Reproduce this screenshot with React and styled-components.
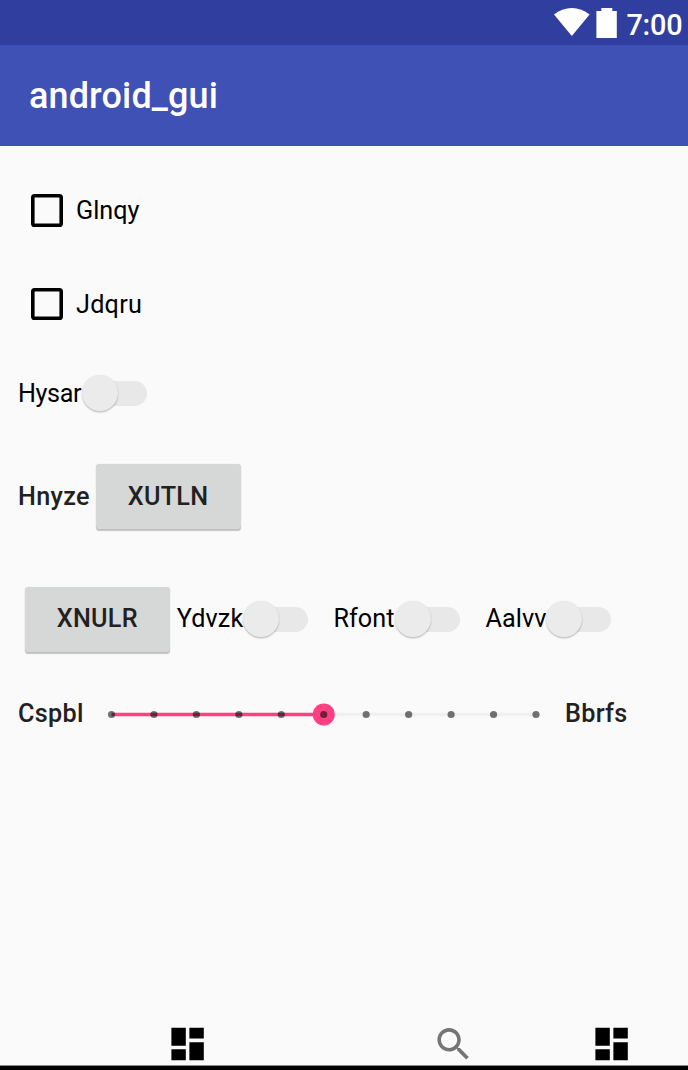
import React from "react";
import styled, { createGlobalStyle } from "styled-components";

const GlobalStyle = createGlobalStyle`
  * { box-sizing: border-box; }
  body {
    margin: 0;
    background: #fafafa;
    font-family: Roboto, "Noto Sans", sans-serif;
    font-size: 25.2px;
    line-height: 30px;
    color: #000;
  }
`;

const Screen = styled.div`
  display: flex;
  flex-direction: column;
  width: 688px;
  height: 1070px;
  overflow: hidden;
  background: #fafafa;
`;

const StatusBar = styled.header`
  display: flex;
  justify-content: flex-end;
  align-items: flex-start;
  height: 45px;
  padding-right: 6px;
  flex: none;
  background: #303f9f;
  color: #fff;
`;

const StatusIcons = styled.svg`
  display: block;
  width: 64px;
  height: 45px;
  margin-right: 9px;
`;

const Clock = styled.span`
  width: 55.6px;
  font-size: 28.8px;
  font-weight: 500;
  line-height: 34px;
  letter-spacing: -0.2px;
  margin-top: 8px;
`;

const AppBar = styled.div`
  display: flex;
  align-items: center;
  height: 100.7px;
  padding: 2px 0 0 29px;
  flex: none;
  background: #3f51b5;
`;

const Title = styled.h1`
  margin: 0;
  font-size: 36px;
  font-weight: 500;
  line-height: 42px;
  letter-spacing: 0.13px;
  color: #fff;
`;

const Content = styled.main`
  flex: 1;
  min-height: 0;
  padding: 18.3px 0 0 18px;
`;

const Row = styled.div`
  display: flex;
  align-items: center;
  height: ${(p) => p.$height}px;
  padding-left: ${(p) => p.$indent || 0}px;
`;

const Box = styled.span`
  width: 32.4px;
  height: 32.4px;
  margin-right: 13px;
  border-radius: 3.6px;
  box-shadow: inset 0 0 0 3.6px #000;
`;

const Label = styled.span`
  width: ${(p) => (p.$width ? `${p.$width}px` : "auto")};
  flex: none;
  padding-top: ${(p) => (p.$drop ?? 1.6)}px;
  white-space: nowrap;
  font-weight: ${(p) => (p.$strong ? 500 : 400)};
  letter-spacing: ${(p) => p.$tracking ?? (p.$strong ? 0.3 : 0.1)}px;
  color: ${(p) => (p.$strong ? "#212121" : "#000")};
`;

const Track = styled.span`
  display: flex;
  align-items: center;
  width: 60px;
  height: 25.2px;
  flex: none;
  margin-left: 4.6px;
  margin-right: ${(p) => p.$after || 0}px;
  border-radius: 13px;
  background: #e8e8e8;
`;

const Thumb = styled.span`
  width: 36px;
  height: 36px;
  flex: none;
  margin-left: -5px;
  border-radius: 50%;
  background: #ebebeb;
  box-shadow: 0 1.5px 1.5px rgba(0, 0, 0, 0.2), 0 0 1.5px rgba(0, 0, 0, 0.09);
`;

const RaisedButton = styled.button`
  width: 145px;
  height: 65px;
  flex: none;
  margin-right: 7px;
  padding: 0;
  border: 0;
  border-radius: 3.6px;
  background: #d6d7d7;
  box-shadow: 0 1.5px 1px rgba(0, 0, 0, 0.22), 0 0 1px rgba(0, 0, 0, 0.18);
  font: 500 25.2px/30px Roboto, sans-serif;
  letter-spacing: 0.3px;
  color: #212121;
`;

const SliderArt = styled.svg`
  display: block;
  width: 454px;
  height: 30px;
  margin-right: 13px;
  flex: none;
`;

const BottomBar = styled.nav`
  display: flex;
  align-items: flex-start;
  height: 43px;
  padding-left: 165.6px;
  flex: none;
`;

const NavIcon = styled.svg`
  display: block;
  width: 43.2px;
  height: 43.2px;
  margin-right: ${(p) => p.$after || 0}px;
  fill: ${(p) => p.$tone || "#000"};
`;

const BottomEdge = styled.div`
  height: 5px;
  flex: none;
  border-top: 1px solid #888;
  background: #000;
`;

const Toggle = ({ label, width, after, tracking, drop }) => (
  <>
    <Label $width={width} $tracking={tracking} $drop={drop}>{label}</Label>
    <Track $after={after}>
      <Thumb />
    </Track>
  </>
);

const Slider = () => {
  const start = 13.5;
  const step = 42.45;
  const current = start + step * 5;
  const end = start + step * 10;
  return (
    <SliderArt viewBox="0 0 454 30">
      <path d={`M${start} 15.5H${end}`} stroke="#f0f0f0" strokeWidth="3.4" />
      <path d={`M${start} 15.5H${current}`} stroke="#ff4081" strokeWidth="3.6" />
      <circle cx={current} cy="15.5" r="11" fill="#ff4081" />
      {Array.from({ length: 11 }, (_, i) => (
        <circle key={i} cx={start + i * step} cy="15.5" r="3.6" fill="#000" fillOpacity="0.54" />
      ))}
    </SliderArt>
  );
};

const Dashboard = ({ after }) => (
  <NavIcon viewBox="0 -0.2 24 24" $after={after}>
    <path d="M3 13h8V3H3v10zm0 8h8v-6H3v6zm10 0h8V11h-8v10zm0-18v6h8V3h-8z" />
  </NavIcon>
);

export default function App() {
  return (
    <Screen>
      <GlobalStyle />
      <StatusBar>
        <StatusIcons viewBox="0 0 64 45">
          <path d="M1 14.5C11 5.8 26.5 5.8 36.6 14.5L18.8 36z" fill="#fff" />
          <path d="M48.3 8h11v3h4.5v27H43.4V11h4.9z" fill="#fff" />
        </StatusIcons>
        <Clock>7:00</Clock>
      </StatusBar>
      <AppBar>
        <Title>android_gui</Title>
      </AppBar>
      <Content>
        <Row $height={93} $indent={12.6}>
          <Box />
          <Label $tracking={0}>Glnqy</Label>
        </Row>
        <Row $height={93.5} $indent={12.6}>
          <Box />
          <Label $drop={1.6} $tracking={0.25}>Jdqru</Label>
        </Row>
        <Row $height={86}>
          <Toggle label="Hysar" width={64} tracking={-0.4} drop={1} />
        </Row>
        <Row $height={121}>
          <Label $strong $width={77.6} $drop={0.6}>Hnyze</Label>
          <RaisedButton>XUTLN</RaisedButton>
        </Row>
        <Row $height={124} $indent={6.8}>
          <RaisedButton>XNULR</RaisedButton>
          <Toggle label="Ydvzk" width={67} after={25} drop={0} />
          <Toggle label="Rfont" width={62.4} after={25} drop={0} />
          <Toggle label="Aalvv" width={61.4} drop={0} />
        </Row>
        <Row $height={65}>
          <Label $strong $width={80} $drop={0}>Cspbl</Label>
          <Slider />
          <Label $strong $drop={0}>Bbrfs</Label>
        </Row>
      </Content>
      <BottomBar>
        <Dashboard after={223.2} />
        <NavIcon viewBox="0 -0.4 24 24" $tone="#757575" $after={115}>
          <path d="M15.5 14h-.79l-.28-.27C15.41 12.59 16 11.11 16 9.5 16 5.91 13.09 3 9.5 3S3 5.91 3 9.5 5.91 16 9.5 16c1.61 0 3.09-.59 4.23-1.57l.27.28v.79l5 4.99L20.49 19l-4.99-5zm-6 0C7.01 14 5 11.99 5 9.5S7.01 5 9.5 5 14 7.01 14 9.5 11.99 14 9.5 14z" />
        </NavIcon>
        <Dashboard />
      </BottomBar>
      <BottomEdge />
    </Screen>
  );
}
